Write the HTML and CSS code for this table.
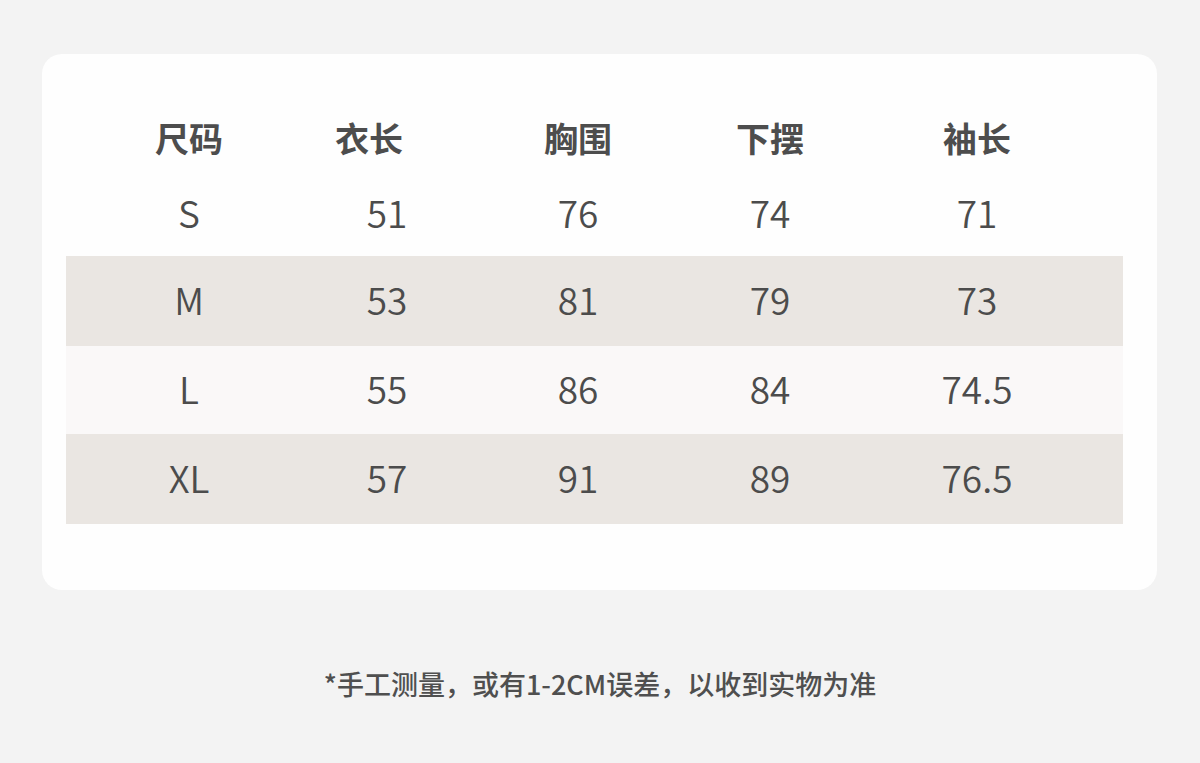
FILE: index.html
```html
<!DOCTYPE html>
<html lang="zh-CN">
<head>
<meta charset="utf-8">
<title>尺码表</title>
<link rel="stylesheet" href="styles.css">
</head>
<body>
<div class="page">
  <section class="card">
    <div class="row head">
      <div class="cell">尺码</div>
      <div class="cell shift">衣长</div>
      <div class="cell">胸围</div>
      <div class="cell">下摆</div>
      <div class="cell">袖长</div>
    </div>
    <div class="row data first">
      <div class="cell">S</div>
      <div class="cell">51</div>
      <div class="cell">76</div>
      <div class="cell">74</div>
      <div class="cell">71</div>
    </div>
    <div class="row data tint">
      <div class="cell">M</div>
      <div class="cell">53</div>
      <div class="cell">81</div>
      <div class="cell">79</div>
      <div class="cell">73</div>
    </div>
    <div class="row data pale">
      <div class="cell">L</div>
      <div class="cell">55</div>
      <div class="cell">86</div>
      <div class="cell">84</div>
      <div class="cell">74.5</div>
    </div>
    <div class="row data tint">
      <div class="cell">XL</div>
      <div class="cell">57</div>
      <div class="cell">91</div>
      <div class="cell">89</div>
      <div class="cell">76.5</div>
    </div>
  </section>
  <p class="note">*手工测量，或有1-2CM误差，以收到实物为准</p>
</div>
</body>
</html>
```

FILE: styles.css
```css
html, body {
  margin: 0;
  padding: 0;
}

body {
  background: #f3f3f3;
  font-family: "Noto Sans CJK SC", "Noto Sans", sans-serif;
  color: #4f4f4f;
  width: 1200px;
  height: 763px;
  overflow: hidden;
}

.page {
  padding-top: 54px;
}

.card {
  margin-left: 42px;
  width: 1115px;
  box-sizing: border-box;
  background: #fefefe;
  border-radius: 20px;
  padding: 54px 34px 66px 24px;
}

.row {
  display: grid;
  grid-template-columns: 246px 150px 232px 152px 262px 15px;
}

.cell {
  display: flex;
  align-items: center;
  justify-content: center;
}

.head {
  height: 64px;
  font-size: 34px;
  font-weight: 700;
  color: #4d4d4d;
}

.head .cell {
  padding-bottom: 5px;
}

.head .shift {
  padding-right: 36px;
}

.data {
  height: 90px;
  font-size: 37px;
  font-weight: 350;
  color: #4c4c4c;
}

.data .cell {
  padding-bottom: 4px;
}

.data.first {
  height: 84px;
}

.data.pale {
  height: 88px;
  background: #faf8f8;
}

.tint {
  background: #eae6e2;
}

.note {
  margin: 0;
  padding-top: 74px;
  text-align: center;
  font-size: 27px;
  font-weight: 500;
  color: #4f4f4f;
}
```
